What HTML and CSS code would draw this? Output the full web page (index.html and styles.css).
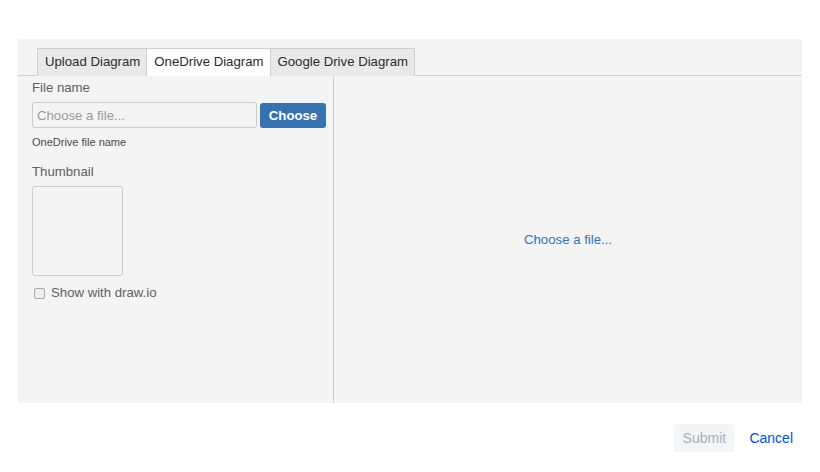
FILE: index.html
```html
<!DOCTYPE html>
<html>
<head>
<meta charset="utf-8">
<link rel="stylesheet" href="styles.css">
</head>
<body>
<div class="dialog">
  <div class="panel">
    <div class="tabs">
      <div class="tab">Upload Diagram</div>
      <div class="tab active">OneDrive Diagram</div>
      <div class="tab">Google Drive Diagram</div>
    </div>
    <div class="content">
      <div class="left">
        <div class="label">File name</div>
        <div class="file-row">
          <input class="file-input" type="text" placeholder="Choose a file...">
          <button class="choose-btn">Choose</button>
        </div>
        <div class="hint">OneDrive file name</div>
        <div class="label thumb-label">Thumbnail</div>
        <div class="thumb"></div>
        <label class="check-row"><span class="checkbox"></span>Show with draw.io</label>
      </div>
      <div class="right">
        <a class="choose-link">Choose a file...</a>
      </div>
    </div>
  </div>
  <div class="footer">
    <button class="submit">Submit</button>
    <button class="cancel">Cancel</button>
  </div>
</div>
</body>
</html>
```

FILE: styles.css
```css
* { box-sizing: border-box; }
html, body { margin: 0; padding: 0; background: #fff; }
body {
  font-family: "Liberation Sans", Arial, Helvetica, sans-serif;
  font-size: 13px;
  color: #333;
}
.dialog {
  padding: 39px 18px 0 18px;
}
.panel {
  background: #f4f4f4;
  height: 364px;
  display: flex;
  flex-direction: column;
}
.tabs {
  display: flex;
  padding: 9px 0 0 19px;
  border-bottom: 1px solid #cfcfcf;
  height: 37px;
}
.tab {
  height: 28px;
  line-height: 26px;
  padding: 0 6px 0 7px;
  border: 1px solid #cfcfcf;
  border-bottom: none;
  background: #e9e9e9;
  color: #2b2b2b;
  font-size: 13.2px;
  margin-bottom: -1px;
}
.tab + .tab { border-left: none; }
.tab.active {
  background: #fff;
}
.content {
  flex: 1;
  display: flex;
}
.left {
  width: 316px;
  border-right: 1px solid #cfcfcf;
  padding: 4px 0 0 14px;
  display: flex;
  flex-direction: column;
  align-items: flex-start;
}
.label {
  color: #606060;
  font-size: 13.2px;
  line-height: 16px;
}
.file-row {
  display: flex;
  align-items: center;
  margin-top: 6px;
  gap: 3px;
}
.file-input {
  width: 225px;
  height: 26px;
  border: 1px solid #ccc;
  border-radius: 3px;
  background: #f4f4f4;
  font-family: "Liberation Sans", Arial, sans-serif;
  font-size: 13.2px;
  padding: 0 4px;
  color: #333;
}
.file-input::placeholder { color: #999; }
.choose-btn {
  width: 66px;
  height: 25px;
  border: none;
  border-radius: 3px;
  background: #3572b0;
  color: #fff;
  font-family: "Liberation Sans", Arial, sans-serif;
  font-weight: bold;
  font-size: 13.2px;
  padding: 0;
}
.hint {
  font-size: 11px;
  color: #4a4a4a;
  margin-top: 7px;
  line-height: 14px;
}
.thumb-label { margin-top: 15px; }
.thumb {
  width: 91px;
  height: 90px;
  border: 1px solid #ccc;
  border-radius: 3px;
  margin-top: 6px;
}
.check-row {
  display: flex;
  align-items: center;
  margin-top: 9px;
  color: #606060;
  font-size: 13.2px;
  line-height: 16px;
}
.checkbox {
  width: 11px;
  height: 11px;
  border: 1px solid #aaa;
  border-radius: 2px;
  background: #eee;
  margin: 0 6px 0 2px;
}
.right {
  flex: 1;
  display: flex;
  align-items: center;
  justify-content: center;
}
.choose-link {
  color: #3572b0;
  font-size: 13.2px;
}
.footer {
  display: flex;
  justify-content: flex-end;
  align-items: center;
  padding: 21px 9px 0 0;
  gap: 5px;
}
.submit {
  width: 60px;
  height: 28px;
  border: none;
  border-radius: 3px;
  background: #f4f5f7;
  color: #a5adba;
  font-family: "Liberation Sans", Arial, sans-serif;
  font-size: 14px;
  padding: 0;
}
.cancel {
  background: none;
  border: none;
  color: #0052cc;
  font-family: "Liberation Sans", Arial, sans-serif;
  font-size: 14px;
  padding: 0 0 0 10px;
  height: 28px;
}
```
